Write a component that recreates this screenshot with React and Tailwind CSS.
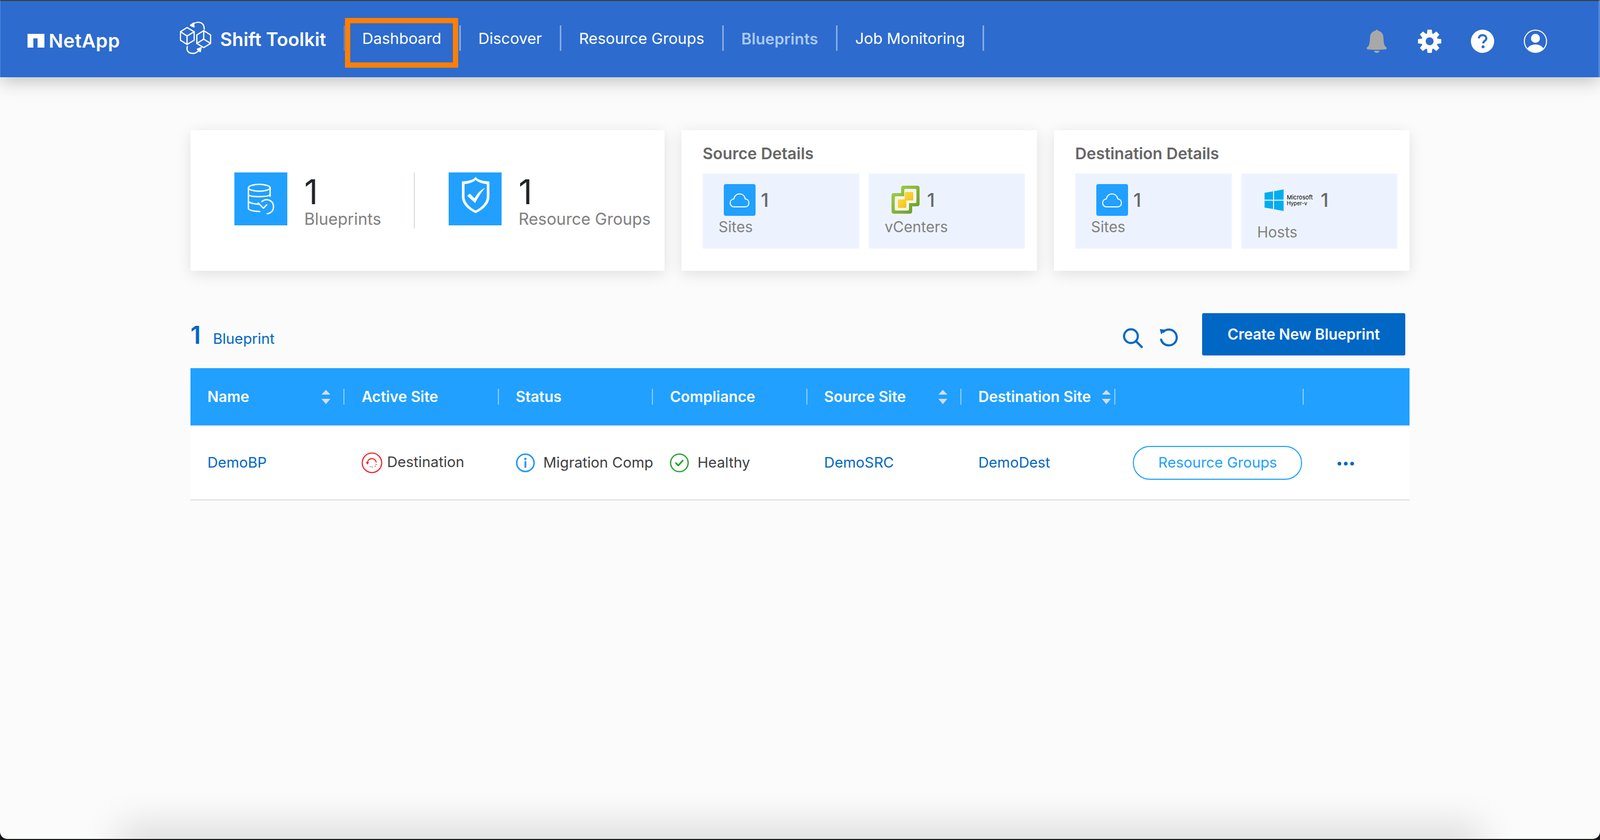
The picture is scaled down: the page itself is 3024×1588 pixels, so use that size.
import React from "react";

const NetAppMark = () => (
  <svg width="32" height="26" viewBox="0 0 32 26" className="shrink-0">
    <path d="M0 0H32V26H19V8.5H11V26H0Z" fill="#fff" />
  </svg>
);

const ShiftMark = () => (
  <svg width="64" height="68" viewBox="0 0 64 68" fill="none" stroke="#fff" strokeWidth="2.4" strokeLinejoin="round" strokeLinecap="round" className="shrink-0">
    <path d="M13.5 15L27 23V39L13.5 47L1 39V23Z" />
    <path d="M1 23L13.5 31L27 23M13.5 31V47" />
    <path d="M45 21L58 29V45L45 53L32 45V29Z" />
    <path d="M45 21V37M32 45L45 37L58 45" />
    <path d="M24 10C30 3 46 2 46 18" />
    <path d="M20 11L26 6.5L26.5 14Z" fill="#fff" />
    <path d="M14 51C10 66 30 68 37 57" />
    <path d="M40 53L38.5 60.5L33 56Z" fill="#fff" />
  </svg>
);

const Bell = () => (
  <svg width="38" height="44" viewBox="0 0 38 44" fill="#a8a8a8">
    <path d="M19 0C20 0 20.6 1.2 21.6 2C27 3.4 31 7 31.6 14C32.2 20 32 26 34 30C35.6 32.6 38 33 37.8 35.4C37.6 37 36 37.4 34 37.6C24 38.4 14 38.4 4 37.6C2 37.4 0.4 37 0.2 35.4C0 33 2.4 32.6 4 30C6 26 5.8 20 6.4 14C7 7 11 3.4 16.4 2C17.4 1.2 18 0 19 0Z" />
    <path d="M13.5 40H24.5C23.5 42.6 21.4 44 19 44C16.6 44 14.5 42.6 13.5 40Z" />
  </svg>
);

const Gear = () => (
  <svg width="44" height="44" viewBox="0 0 44 44" fill="#fff">
    <circle cx="22" cy="22" r="11.5" fill="none" stroke="#fff" strokeWidth="8" />
    {[0, 45, 90, 135, 180, 225, 270, 315].map((a) => (
      <path key={a} d="M18 0H26L27 8H17Z" transform={`rotate(${a} 22 22)`} />
    ))}
  </svg>
);

const Help = () => (
  <svg width="44" height="44" viewBox="0 0 44 44">
    <circle cx="22" cy="22" r="22" fill="#fff" />
    <path d="M15 16.5C15.5 12.5 18.5 10.5 22.2 10.5C26.2 10.5 29.2 13 29.2 16.4C29.2 21.2 23.2 21.4 23.2 26" fill="none" stroke="#2d6bce" strokeWidth="4" />
    <circle cx="23" cy="32.5" r="2.8" fill="#2d6bce" />
  </svg>
);

const User = () => (
  <svg width="44" height="44" viewBox="0 0 44 44">
    <defs>
      <clipPath id="userclip"><circle cx="22" cy="22" r="21" /></clipPath>
    </defs>
    <circle cx="22" cy="22" r="21" fill="none" stroke="#fff" strokeWidth="2" />
    <circle cx="22" cy="16.5" r="8.5" fill="#fff" />
    <ellipse cx="22" cy="42" rx="17" ry="14" fill="#fff" clipPath="url(#userclip)" />
  </svg>
);

const DbIcon = () => (
  <div className="flex h-[100px] w-[100px] shrink-0 items-center justify-center bg-[#21a0ff]">
    <svg width="100" height="100" viewBox="0 0 100 100" fill="none" stroke="#fff" strokeWidth="2.6" strokeLinecap="round">
      <ellipse cx="47" cy="29" rx="20.5" ry="6.5" />
      <path d="M26.5 29V68C26.5 71 33 73 48 74" />
      <path d="M67.5 29V45" />
      <path d="M26.5 42C30 47 63 47 67.5 42" />
      <path d="M26.5 55C31 59 42 60 46 60" />
      <path d="M52 55C60 48 74 52 74 65C74 74 66 78 62 78" />
      <path d="M52 55V69H61" strokeLinejoin="round" transform="rotate(-45 52 62) translate(-2 -1)" />
    </svg>
  </div>
);

const ShieldIcon = () => (
  <div className="flex h-[100px] w-[100px] shrink-0 items-center justify-center bg-[#21a0ff]">
    <svg width="100" height="100" viewBox="0 0 100 100">
      <path d="M51 8C53 12 59 16 77 17V46C77 60 64 71 51 77C38 71 25 60 25 46V17C43 16 49 12 51 8Z" fill="#fff" />
      <path d="M51 14C54 17 60 21 72 22V46C72 57 61 67 51 72C41 67 30 57 30 46V22C42 21 48 17 51 14Z" fill="#21a0ff" />
      <path d="M35 44L40 40L49 49C53 41 60 33 69 29C62 37 55 47 50 58Z" fill="#fff" />
    </svg>
  </div>
);

const CloudIcon = () => (
  <div className="flex h-[60px] w-[60px] shrink-0 items-center justify-center rounded-[4px] bg-[#21a0ff]">
    <svg width="60" height="60" viewBox="0 0 60 60" fill="none" stroke="#fff" strokeWidth="1.9">
      <path d="M19 43H40C45 43 47.5 39.5 47.5 35.5C47.5 31.5 44.5 28.5 40.5 28C39.5 22 35 18.5 29.5 18.5C24 18.5 20 22.5 19 28C15 28.5 12 31.5 12 35.5C12 39.5 15 43 19 43Z" />
    </svg>
  </div>
);

const VCenterIcon = () => (
  <svg width="54" height="54" viewBox="0 0 54 54" className="shrink-0">
    <defs>
      <linearGradient id="vg" x1="0" y1="0" x2="1" y2="1">
        <stop offset="0" stopColor="#a6d64e" />
        <stop offset="1" stopColor="#65962c" />
      </linearGradient>
      <linearGradient id="vy" x1="0" y1="0" x2="1" y2="1">
        <stop offset="0" stopColor="#fbdb3c" />
        <stop offset="1" stopColor="#f7c020" />
      </linearGradient>
    </defs>
    <path d="M18 4C18 1.8 19.8 0 22 0H49C51.2 0 53 1.8 53 4V35C53 37.2 51.2 39 49 39H39V49C39 51.2 37.2 53 35 53H4C1.8 53 0 51.2 0 49V18C0 15.8 1.8 14 4 14H18Z" fill="url(#vg)" />
    <path d="M24 8C24 7 25 6 26 6H45C46 6 47 7 47 8V31C47 32 46 33 45 33H33V45C33 46 32 47 31 47H8C7 47 6 46 6 45V22C6 21 7 20 8 20H24Z" fill="#f3f6ea" />
    <rect x="25" y="12" width="16" height="16" rx="1.5" fill="url(#vy)" />
    <rect x="12" y="26" width="16" height="16" rx="1.5" fill="url(#vy)" />
  </svg>
);

const WindowsIcon = () => (
  <svg width="36" height="41" viewBox="0 0 36 41" fill="#00adef" className="shrink-0">
    <path d="M0 6.5L16 3.8V19.5H0Z" />
    <path d="M18 3.4L36 0V19.5H18Z" />
    <path d="M0 21.5H16V37L0 34.5Z" />
    <path d="M18 21.5H36V41L18 37.5Z" />
  </svg>
);

const Sort = () => (
  <svg width="18" height="27" viewBox="0 0 18 27" fill="#d3dde4" className="shrink-0">
    <path d="M9 0L17.5 9H0.5Z" />
    <path d="M0.5 17H17.5L9 27Z" />
  </svg>
);

const SearchIcon = () => (
  <svg width="38" height="38" viewBox="0 0 38 38" fill="none" stroke="#0067c5" strokeWidth="4" strokeLinecap="round">
    <circle cx="15.5" cy="15.5" r="13" />
    <path d="M25 25L36 36" />
  </svg>
);

const RefreshIcon = () => (
  <svg width="38" height="38" viewBox="0 0 38 38" fill="none" stroke="#0067c5" strokeWidth="4" strokeLinecap="round">
    <path d="M9 7C12 4 15 3 19 3C27.5 3 34 9.5 34 18C34 26.5 27.5 33 19 33C12 33 6 28.5 4.5 22" />
    <path d="M2 2L13 3.5L4.5 12Z" fill="#0067c5" stroke="none" />
  </svg>
);

const RedIcon = () => (
  <svg width="40" height="40" viewBox="0 0 40 40" fill="none" stroke="#f5141e" className="shrink-0">
    <circle cx="20" cy="20" r="18.4" strokeWidth="2" />
    <path d="M11.5 19C12.5 14.5 16 12 20 12C24.5 12 28 15.5 28 19.5" strokeWidth="1.8" />
    <path d="M28 22C28 25 26 27 24 27.5" strokeWidth="1.8" strokeDasharray="1.6 2.4" />
    <path d="M21 28L16 27" strokeWidth="1.8" strokeDasharray="1.6 2.4" />
    <path d="M8.5 18.5H14.5L11.5 23.5Z" fill="#f5141e" stroke="none" />
  </svg>
);

const InfoIcon = () => (
  <svg width="36" height="36" viewBox="0 0 36 36" fill="none" stroke="#2196f3" className="shrink-0">
    <circle cx="18" cy="18" r="16.4" strokeWidth="2.8" />
    <circle cx="18" cy="10.5" r="2.2" fill="#2196f3" stroke="none" />
    <path d="M18 16V26" strokeWidth="3.4" strokeLinecap="round" />
  </svg>
);

const OkIcon = () => (
  <svg width="36" height="36" viewBox="0 0 36 36" fill="none" stroke="#23a02c" className="shrink-0">
    <circle cx="18" cy="18" r="16.6" strokeWidth="2.4" />
    <path d="M11.5 18.5L16 23L24.5 13.5" strokeWidth="3" strokeLinecap="round" strokeLinejoin="round" />
  </svg>
);

const navItems = [
  { label: "Dashboard", cls: "text-[29px] font-normal text-white" },
  { label: "Discover", cls: "text-[29px] font-normal text-white" },
  { label: "Resource Groups", cls: "text-[29px] font-normal text-white" },
  { label: "Blueprints", cls: "text-[29.5px] font-semibold text-[#a9c9f5]" },
  { label: "Job Monitoring", cls: "text-[29px] font-normal text-white" },
];

const Stat = ({ icon, label, cls }) => (
  <div className={`flex items-start ${cls}`}>
    {icon}
    <div className="ml-[32px] pt-[4px]">
      <div className="mt-[1px] text-[64px] leading-[64px] font-normal text-[#212529]">1</div>
      <div className="-mt-[1px] text-[30.6px] leading-[40px] whitespace-nowrap text-[#808080]">{label}</div>
    </div>
  </div>
);

const Block = ({ cls, rowCls, icon, label, labelCls }) => (
  <div className={`h-[142px] bg-[#edf3fe] pt-[20px] pl-[30px] ${cls}`}>
    <div className={`flex h-[60px] items-center ${rowCls}`}>
      {icon}
      <span className="text-[36px] leading-none font-medium text-[#666a6d]">1</span>
    </div>
    <div className={`text-[28px] leading-[32px] text-[#808080] ${labelCls}`}>{label}</div>
  </div>
);

const Th = ({ label, sort, pr }) => (
  <div className="flex h-[108px] items-center">
    <div className={`flex h-[30px] flex-1 items-center justify-between border-r-2 border-white/50 pl-[32px] ${pr}`}>
      <span className="text-[28px] font-semibold whitespace-nowrap text-white">{label}</span>
      {sort && <Sort />}
    </div>
  </div>
);

const Td = ({ children }) => (
  <div className="flex h-[138px] items-center overflow-hidden pl-[32px] text-[27.5px] whitespace-nowrap">{children}</div>
);

export default function App() {
  return (
    <div className="relative h-[1588px] w-[3024px] overflow-hidden bg-[#14181b] font-[Inter,sans-serif]">
      <div className="relative h-[1586px] overflow-hidden rounded-b-[14px] bg-[#fbfbfb]">
        <header className="flex h-[146px] items-center border-t-2 border-r-[3px] border-l border-t-[#3c4043] border-r-[#5488db] border-l-[#5488db] bg-[#2d6bce] shadow-[0_6px_34px_rgba(0,0,0,0.26)]">
          <div className="mt-[5px] flex w-[339px] items-center pl-[51px]">
            <NetAppMark />
            <span className="ml-[8px] text-[36px] leading-none font-semibold tracking-[0.4px] text-white">NetApp</span>
          </div>
          <div className="-mt-[6px] flex w-[310px] items-center">
            <ShiftMark />
            <span className="mt-[6px] ml-[12px] text-[35px] leading-none font-semibold whitespace-nowrap text-white">Shift Toolkit</span>
          </div>
          <nav className="-mt-[4px] flex h-[48px] items-center border-l border-[#88a9e5]">
            {navItems.map((n) => (
              <div key={n.label} className={`flex h-[48px] items-center border-r-[3px] border-[#88a9e5] px-[33.5px] pt-[2px] whitespace-nowrap ${n.cls}`}>
                {n.label}
              </div>
            ))}
          </nav>
          <div className="mt-[8px] ml-auto flex items-center gap-[56px] pr-[97px]">
            <div className="flex w-[44px] justify-center"><Bell /></div>
            <Gear />
            <Help />
            <User />
          </div>
        </header>

        <main className="mx-auto w-[2304px] pt-[100px]">
          <section className="flex gap-[32px]">
            <div className="flex h-[266px] w-[896px] items-start bg-white pt-[80px] pl-[83px] shadow-[0_6px_26px_rgba(0,0,0,0.11)]">
              <Stat icon={<DbIcon />} label="Blueprints" cls="h-[106px] w-[341px] border-r-2 border-[#d9dde1]" />
              <Stat icon={<ShieldIcon />} label="Resource Groups" cls="ml-[64px]" />
            </div>

            <div className="h-[266px] w-[672px] bg-white pt-[26px] pl-[40px] shadow-[0_6px_26px_rgba(0,0,0,0.11)]">
              <h2 className="mb-[20px] text-[30px] leading-[36px] font-semibold text-[#666666]">Source Details</h2>
              <div className="flex gap-[18px]">
                <Block cls="w-[296px]" rowCls="gap-[10px] pl-[10px]" icon={<CloudIcon />} label="Sites" labelCls="mt-[5px]" />
                <Block cls="w-[295px]" rowCls="gap-[13px] pl-[13px]" icon={<VCenterIcon />} label="vCenters" labelCls="mt-[5px]" />
              </div>
            </div>

            <div className="h-[266px] w-[672px] bg-white pt-[26px] pl-[40px] shadow-[0_6px_26px_rgba(0,0,0,0.11)]">
              <h2 className="mb-[20px] text-[30px] leading-[36px] font-semibold text-[#666666]">Destination Details</h2>
              <div className="flex gap-[18px]">
                <Block cls="w-[296px]" rowCls="gap-[10px] pl-[10px]" icon={<CloudIcon />} label="Sites" labelCls="mt-[5px]" />
                <Block
                  cls="w-[295px]"
                  rowCls="pl-[14px]"
                  icon={
                    <>
                      <WindowsIcon />
                      <div className="ml-[6px] flex w-[64px] flex-col font-['Liberation_Sans',sans-serif] text-black">
                        <span className="text-[11px] leading-[12px]">Microsoft</span>
                        <span className="text-[10px] leading-[10px]">Hyper-v</span>
                      </div>
                    </>
                  }
                  label="Hosts"
                  labelCls="mt-[15px]"
                />
              </div>
            </div>
          </section>

          <section className="mt-[80px] flex h-[80px] items-center justify-between pr-[8px]">
            <div className="mt-[2px] flex items-baseline text-[#0067c5]">
              <span className="text-[46px] leading-none font-semibold">1</span>
              <span className="ml-[23px] text-[27.5px] leading-none">Blueprint</span>
            </div>
            <div className="flex items-center">
              <div className="mt-[14px] flex items-center gap-[30px]">
                <SearchIcon />
                <RefreshIcon />
              </div>
              <button className="ml-[44px] h-[80px] w-[384px] rounded-[3px] bg-[#0067c5] text-[28px] font-semibold text-white">
                Create New Blueprint
              </button>
            </div>
          </section>

          <section className="mt-[24px]">
            <div className="grid grid-cols-[291.4px_291.4px_291.4px_291.4px_291.4px_291.4px_356px_1fr] border-b-2 border-[#e0e0e0] bg-[#21a0ff]">
              <Th label="Name" sort pr="pr-[24px]" />
              <Th label="Active Site" />
              <Th label="Status" />
              <Th label="Compliance" />
              <Th label="Source Site" sort pr="pr-[24px]" />
              <Th label="Destination Site" sort pr="pr-[6px]" />
              <Th />
            </div>
            <div className="grid grid-cols-[291.4px_291.4px_291.4px_291.4px_291.4px_291.4px_356px_1fr] border-b-2 border-[#dfdfdf] bg-white">
              <Td><span className="text-[#0067c5]">DemoBP</span></Td>
              <Td>
                <RedIcon />
                <span className="-mt-[2px] ml-[8px] text-[#404040]">Destination</span>
              </Td>
              <Td>
                <InfoIcon />
                <span className="ml-[16px] text-[#404040]">Migration Comp</span>
              </Td>
              <Td>
                <OkIcon />
                <span className="ml-[16px] text-[#404040]">Healthy</span>
              </Td>
              <Td><span className="text-[#0067c5]">DemoSRC</span></Td>
              <Td><span className="text-[#0067c5]">DemoDest</span></Td>
              <div className="flex h-[138px] items-center pl-[33px]">
                <button className="h-[64px] w-[320px] rounded-full border-2 border-[#21a0ff] text-[27.5px] text-[#21a0ff]">
                  Resource Groups
                </button>
              </div>
              <div className="flex h-[138px] items-center gap-[5px] pt-[3px] pl-[64px]">
                <span className="h-[7px] w-[7px] rounded-full bg-[#0067c5]" />
                <span className="h-[7px] w-[7px] rounded-full bg-[#0067c5]" />
                <span className="h-[7px] w-[7px] rounded-full bg-[#0067c5]" />
              </div>
            </div>
          </section>
        </main>

        <div className="absolute top-[1586px] right-[250px] left-[250px] h-[20px] shadow-[0_0_70px_26px_rgba(0,0,0,0.13)]" />
      </div>

      <div className="absolute top-[34px] left-[652px] h-[94px] w-[214px] border-[10px] border-[#ff7f00]" />
    </div>
  );
}
